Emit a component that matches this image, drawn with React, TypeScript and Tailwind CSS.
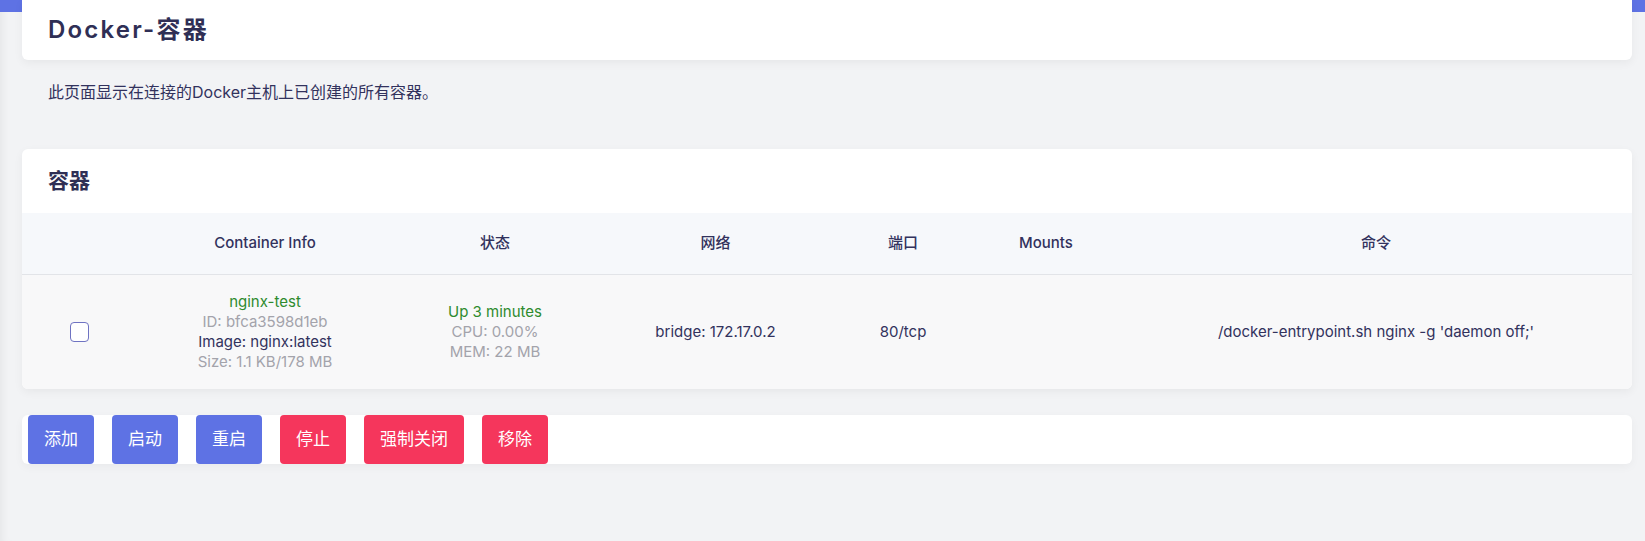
import React from "react";

const font = { fontFamily: 'Inter, "Noto Sans CJK SC", sans-serif' };

function Btn({ label, tone }: { label: string; tone: "blue" | "red" }) {
  return (
    <button
      className={
        "h-[49px] px-[16px] rounded-[4px] text-white text-[17px] leading-none " +
        (tone === "blue" ? "bg-[#5e72e4]" : "bg-[#f5365c]")
      }
    >
      {label}
    </button>
  );
}

export default function App() {
  return (
    <div className="min-h-[541px] bg-[#f2f3f5] relative overflow-hidden shadow-[inset_8px_0_8px_-6px_rgba(0,0,0,0.06)]" style={font}>
      <div className="h-[12px] bg-[#5e72e4]" />
      <div className="-mt-[12px] pl-[22px] pr-[13px]">
        {/* Title card */}
        <div className="h-[60px] bg-white rounded-b-[6px] shadow-[0_3px_10px_rgba(0,0,0,0.05)] flex items-center pl-[26px]">
          <h1 className="text-[24px] font-semibold tracking-[2.2px] text-[#2f2f55]">Docker-容器</h1>
        </div>

        <p className="mt-[22px] pl-[26px] text-[16px] leading-[20px] text-[#32325d]">
          此页面显示在连接的Docker主机上已创建的所有容器。
        </p>

        {/* Containers card */}
        <div className="mt-[47px] bg-white rounded-[6px] shadow-[0_3px_10px_rgba(0,0,0,0.05)] overflow-hidden">
          <div className="h-[64px] flex items-center pl-[26px]">
            <h2 className="text-[21px] font-bold text-[#2f2f55]">容器</h2>
          </div>
          <div className="grid grid-cols-[115px_256px_204px_237px_138px_148px_1fr] h-[62px] items-center bg-[#f6f8fb] border-b border-[#e2e4e8] text-center text-[15px] font-medium text-[#32325d]">
            <div />
            <div>Container Info</div>
            <div>状态</div>
            <div>网络</div>
            <div>端口</div>
            <div>Mounts</div>
            <div>命令</div>
          </div>
          <div className="grid grid-cols-[115px_256px_204px_237px_138px_148px_1fr] h-[114px] items-center bg-[#f8f8f9] text-center text-[15px] leading-[20px] text-[#32325d]">
            <div className="flex justify-center">
              <span className="block w-[19px] h-[20px] rounded-[4px] border-[1.5px] border-[#6f73c2] bg-white" />
            </div>
            <div className="flex flex-col">
              <span className="text-[#2e8b2e]">nginx-test</span>
              <span className="text-[#a3a3ab]">ID: bfca3598d1eb</span>
              <span>Image: nginx:latest</span>
              <span className="text-[#a3a3ab]">Size: 1.1 KB/178 MB</span>
            </div>
            <div className="flex flex-col">
              <span className="text-[#2e8b2e]">Up 3 minutes</span>
              <span className="text-[#a3a3ab]">CPU: 0.00%</span>
              <span className="text-[#a3a3ab]">MEM: 22 MB</span>
            </div>
            <div>bridge: 172.17.0.2</div>
            <div>80/tcp</div>
            <div />
            <div>/docker-entrypoint.sh nginx -g 'daemon off;'</div>
          </div>
        </div>

        {/* Action bar */}
        <div className="mt-[26px] h-[49px] bg-white rounded-[6px] shadow-[0_3px_10px_rgba(0,0,0,0.04)] flex items-stretch gap-[18px] pl-[6px]">
          <Btn label="添加" tone="blue" />
          <Btn label="启动" tone="blue" />
          <Btn label="重启" tone="blue" />
          <Btn label="停止" tone="red" />
          <Btn label="强制关闭" tone="red" />
          <Btn label="移除" tone="red" />
        </div>
      </div>
    </div>
  );
}
